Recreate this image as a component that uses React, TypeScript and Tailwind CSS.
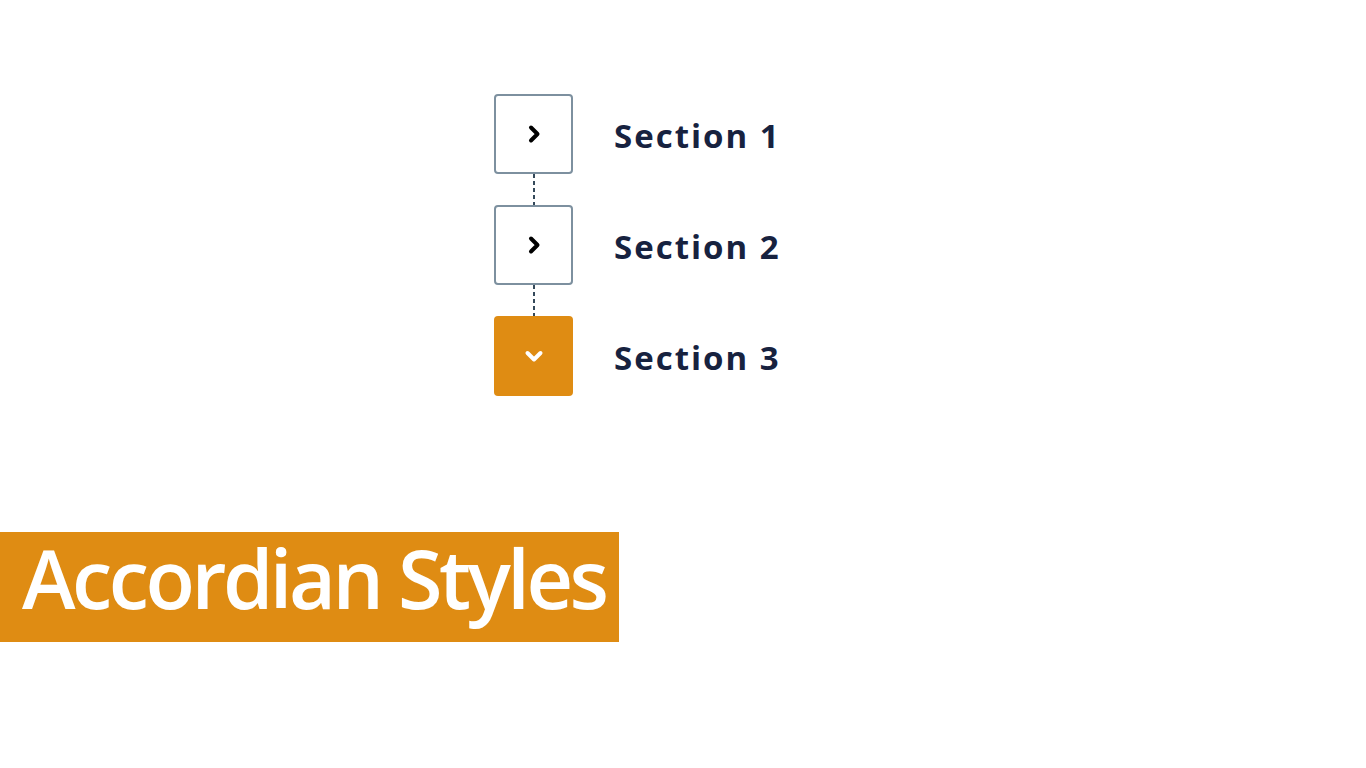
import React from "react";

const sections = [
  { title: "Section 1", open: false },
  { title: "Section 2", open: false },
  { title: "Section 3", open: true },
];

const Chevron = ({ down, white }: { down?: boolean; white?: boolean }) => (
  <svg width="20" height="20" viewBox="0 0 20 20" fill="none">
    <path
      d={down ? "M3.5 7l6.5 6.5 6.5-6.5" : "M7 3.5l6.5 6.5-6.5 6.5"}
      stroke={white ? "#ffffff" : "#000000"}
      strokeWidth="4"
      strokeLinecap="round"
      strokeLinejoin="round"
    />
  </svg>
);

const App = () => {
  return (
    <div className="w-[1366px] h-[768px] bg-white relative overflow-hidden">
      <div className="pt-[94px] pl-[494px] flex flex-col">
        {sections.map((s, i) => (
          <div key={s.title} className="flex flex-col">
            {i > 0 && (
              <div className="w-[79px] flex justify-center">
                <div className="w-[2px] h-[31px] bg-[repeating-linear-gradient(to_bottom,#34495a_0_4px,transparent_4px_7px)]" />
              </div>
            )}
            <div className="flex items-center gap-[41px]">
              <div
                className={
                  s.open
                    ? "w-[79px] h-[80px] rounded-[4px] bg-[#df8c13] flex items-center justify-center"
                    : "w-[79px] h-[80px] rounded-[4px] border-2 border-[#7d909f] bg-white flex items-center justify-center"
                }
              >
                <Chevron down={s.open} white={s.open} />
              </div>
              <span className="font-['Open_Sans'] font-bold text-[33px] leading-none tracking-[2px] text-[#17223f] pt-[2px]">
                {s.title}
              </span>
            </div>
          </div>
        ))}
      </div>
      <div className="absolute left-0 top-[532px] w-[619px] h-[110px] bg-[#df8c13] pt-[5px] pl-[22px]">
        <span className="block font-['Open_Sans'] font-semibold text-[81px] leading-none text-white tracking-[-3.5px] whitespace-nowrap">
          Accordian Styles
        </span>
      </div>
    </div>
  );
};

export default App;
